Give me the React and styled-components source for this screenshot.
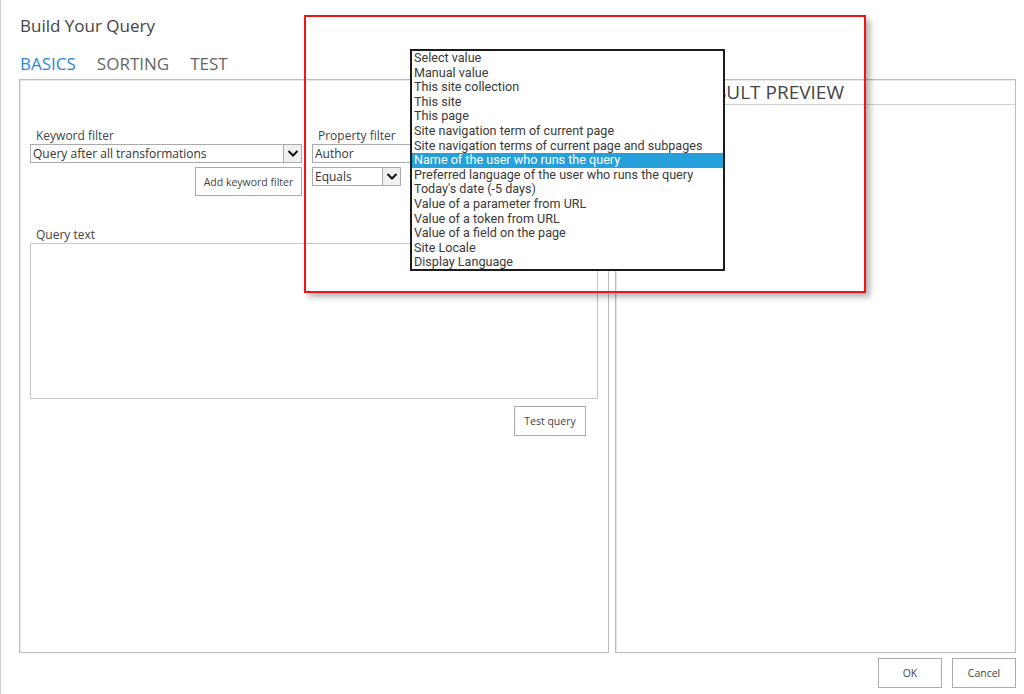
import styled, { createGlobalStyle } from 'styled-components';

const GlobalStyle = createGlobalStyle`
  html, body {
    margin: 0;
    padding: 0;
    background: #fff;
  }
  body {
    font-family: "Open Sans", "Noto Sans", sans-serif;
    color: #444;
  }
`;

const Dialog = styled.div`
  position: relative;
  box-sizing: border-box;
  width: 1024px;
  height: 694px;
  padding: 0 8px 0 18px;
  border-left: 1px solid #cfcfcf;
  display: flex;
  flex-direction: column;
  overflow: hidden;
`;

const Title = styled.h1`
  margin: 14px 0 0 1px;
  font-size: 17px;
  font-weight: 400;
  line-height: 24px;
  color: #444;
`;

const Tabs = styled.div`
  display: flex;
  gap: 21px;
  margin: 14px 0 0 1px;
  height: 24px;
`;

const Tab = styled.span`
  font-size: 17px;
  line-height: 24px;
  color: ${({ $active }) => ($active ? '#2b88d8' : '#666')};
`;

const Panels = styled.div`
  display: flex;
  gap: 6px;
  margin-top: 3px;
  height: 574px;
`;

const Panel = styled.div`
  box-sizing: border-box;
  border: 1px solid #bdbdbd;
  box-shadow: inset 1px 1px 0 #e8e8e8;
  display: flex;
  flex-direction: column;
  ${({ $width }) => ($width ? `width: ${$width}px;` : 'flex: 1;')}
`;

const LeftContent = styled.div`
  padding: 48px 10px 0 10px;
  display: flex;
  flex-direction: column;
`;

const FilterRow = styled.div`
  display: flex;
  gap: 10px;
`;

const FilterColumn = styled.div`
  display: flex;
  flex-direction: column;
  width: ${({ $width }) => $width}px;
`;

const Label = styled.label`
  font-size: 12px;
  line-height: 16px;
  padding-left: 6px;
  color: #444;
`;

const SelectBox = styled.div`
  box-sizing: border-box;
  display: flex;
  align-items: stretch;
  height: 19px;
  width: ${({ $width }) => ($width ? `${$width}px` : '100%')};
  margin-top: ${({ $gap }) => $gap || 0}px;
  border: 1px solid #ababab;
  background: #fff;
`;

const SelectText = styled.span`
  flex: 1;
  font-size: 12px;
  line-height: 17px;
  padding-left: 2px;
  color: #333;
  white-space: nowrap;
  overflow: hidden;
`;

const ArrowBox = styled.span`
  width: 17px;
  border-left: 1px solid #ababab;
  background: #f0f0f0;
  display: flex;
  align-items: center;
  justify-content: center;
`;

const Button = styled.button`
  box-sizing: border-box;
  height: ${({ $height }) => $height || 30}px;
  width: ${({ $width }) => $width}px;
  border: 1px solid #ababab;
  background: #fff;
  font-family: "Open Sans", "Noto Sans", sans-serif;
  font-size: 10.5px;
  color: #444;
  padding: 0;
  cursor: pointer;
`;

const RightAligned = styled.div`
  display: flex;
  justify-content: flex-end;
  margin-top: ${({ $gap }) => $gap || 0}px;
  padding-right: ${({ $pad }) => $pad || 0}px;
`;

const QueryBlock = styled.div`
  display: flex;
  flex-direction: column;
  margin-top: 31px;
`;

const TextArea = styled.div`
  box-sizing: border-box;
  width: 568px;
  height: 156px;
  border: 1px solid #c6c6c6;
  background: #fff;
`;

const PreviewHeader = styled.div`
  box-sizing: border-box;
  height: 25px;
  border-bottom: 1px solid #cfcfcf;
  padding-left: 2px;
  font-size: 19px;
  line-height: 24px;
  color: #444;
  white-space: nowrap;
`;

const Footer = styled.div`
  display: flex;
  justify-content: flex-end;
  gap: 10px;
  margin-top: 5px;
`;

const Highlight = styled.div`
  position: absolute;
  left: 303px;
  top: 15px;
  width: 562px;
  height: 278px;
  box-sizing: border-box;
  border: 2px solid #f01414;
  box-shadow: 4px 4px 6px rgba(0, 0, 0, 0.3);
  pointer-events: none;
`;

const DropList = styled.ul`
  position: absolute;
  left: 409px;
  top: 49px;
  width: 315px;
  height: 222px;
  box-sizing: border-box;
  margin: 0;
  padding: 0;
  list-style: none;
  border: 2px solid #1c1c1c;
  background: #fff;
  overflow: hidden;
`;

const DropItem = styled.li`
  height: 14.6px;
  line-height: 14.6px;
  padding-left: 2px;
  font-family: Roboto, "Liberation Sans", sans-serif;
  font-size: 12.6px;
  white-space: nowrap;
  color: ${({ $selected }) => ($selected ? '#fff' : '#3a3a3a')};
  background: ${({ $selected }) => ($selected ? '#26a0da' : 'transparent')};
`;

const Chevron = () => (
  <svg width="12" height="9" viewBox="0 0 12 9">
    <polyline
      points="1.5,2 6,6.5 10.5,2"
      fill="none"
      stroke="#111"
      strokeWidth="2"
    />
  </svg>
);

const Select = ({ value, width, gap }) => (
  <SelectBox $width={width} $gap={gap}>
    <SelectText>{value}</SelectText>
    <ArrowBox>
      <Chevron />
    </ArrowBox>
  </SelectBox>
);

const options = [
  'Select value',
  'Manual value',
  'This site collection',
  'This site',
  'This page',
  'Site navigation term of current page',
  'Site navigation terms of current page and subpages',
  'Name of the user who runs the query',
  'Preferred language of the user who runs the query',
  "Today's date (-5 days)",
  'Value of a parameter from URL',
  'Value of a token from URL',
  'Value of a field on the page',
  'Site Locale',
  'Display Language',
];

export default function App() {
  return (
    <>
      <GlobalStyle />
      <Dialog>
        <Title>Build Your Query</Title>
        <Tabs>
          <Tab $active>BASICS</Tab>
          <Tab>SORTING</Tab>
          <Tab>TEST</Tab>
        </Tabs>
        <Panels>
          <Panel $width={590}>
            <LeftContent>
              <FilterRow>
                <FilterColumn $width={272}>
                  <Label>Keyword filter</Label>
                  <Select value="Query after all transformations" />
                  <RightAligned $gap={4}>
                    <Button $width={107} $height={29}>
                      Add keyword filter
                    </Button>
                  </RightAligned>
                </FilterColumn>
                <FilterColumn $width={286}>
                  <Label>Property filter</Label>
                  <SelectBox>
                    <SelectText>Author</SelectText>
                  </SelectBox>
                  <Select value="Equals" width={89} gap={4} />
                </FilterColumn>
              </FilterRow>
              <QueryBlock>
                <Label>Query text</Label>
                <TextArea />
                <RightAligned $gap={7} $pad={12}>
                  <Button $width={72}>Test query</Button>
                </RightAligned>
              </QueryBlock>
            </LeftContent>
          </Panel>
          <Panel>
            <PreviewHeader>SEARCH RESULT PREVIEW</PreviewHeader>
          </Panel>
        </Panels>
        <Footer>
          <Button $width={64}>OK</Button>
          <Button $width={64}>Cancel</Button>
        </Footer>
        <Highlight />
        <DropList>
          {options.map((o) => (
            <DropItem key={o} $selected={o === 'Name of the user who runs the query'}>
              {o}
            </DropItem>
          ))}
        </DropList>
      </Dialog>
    </>
  );
}
